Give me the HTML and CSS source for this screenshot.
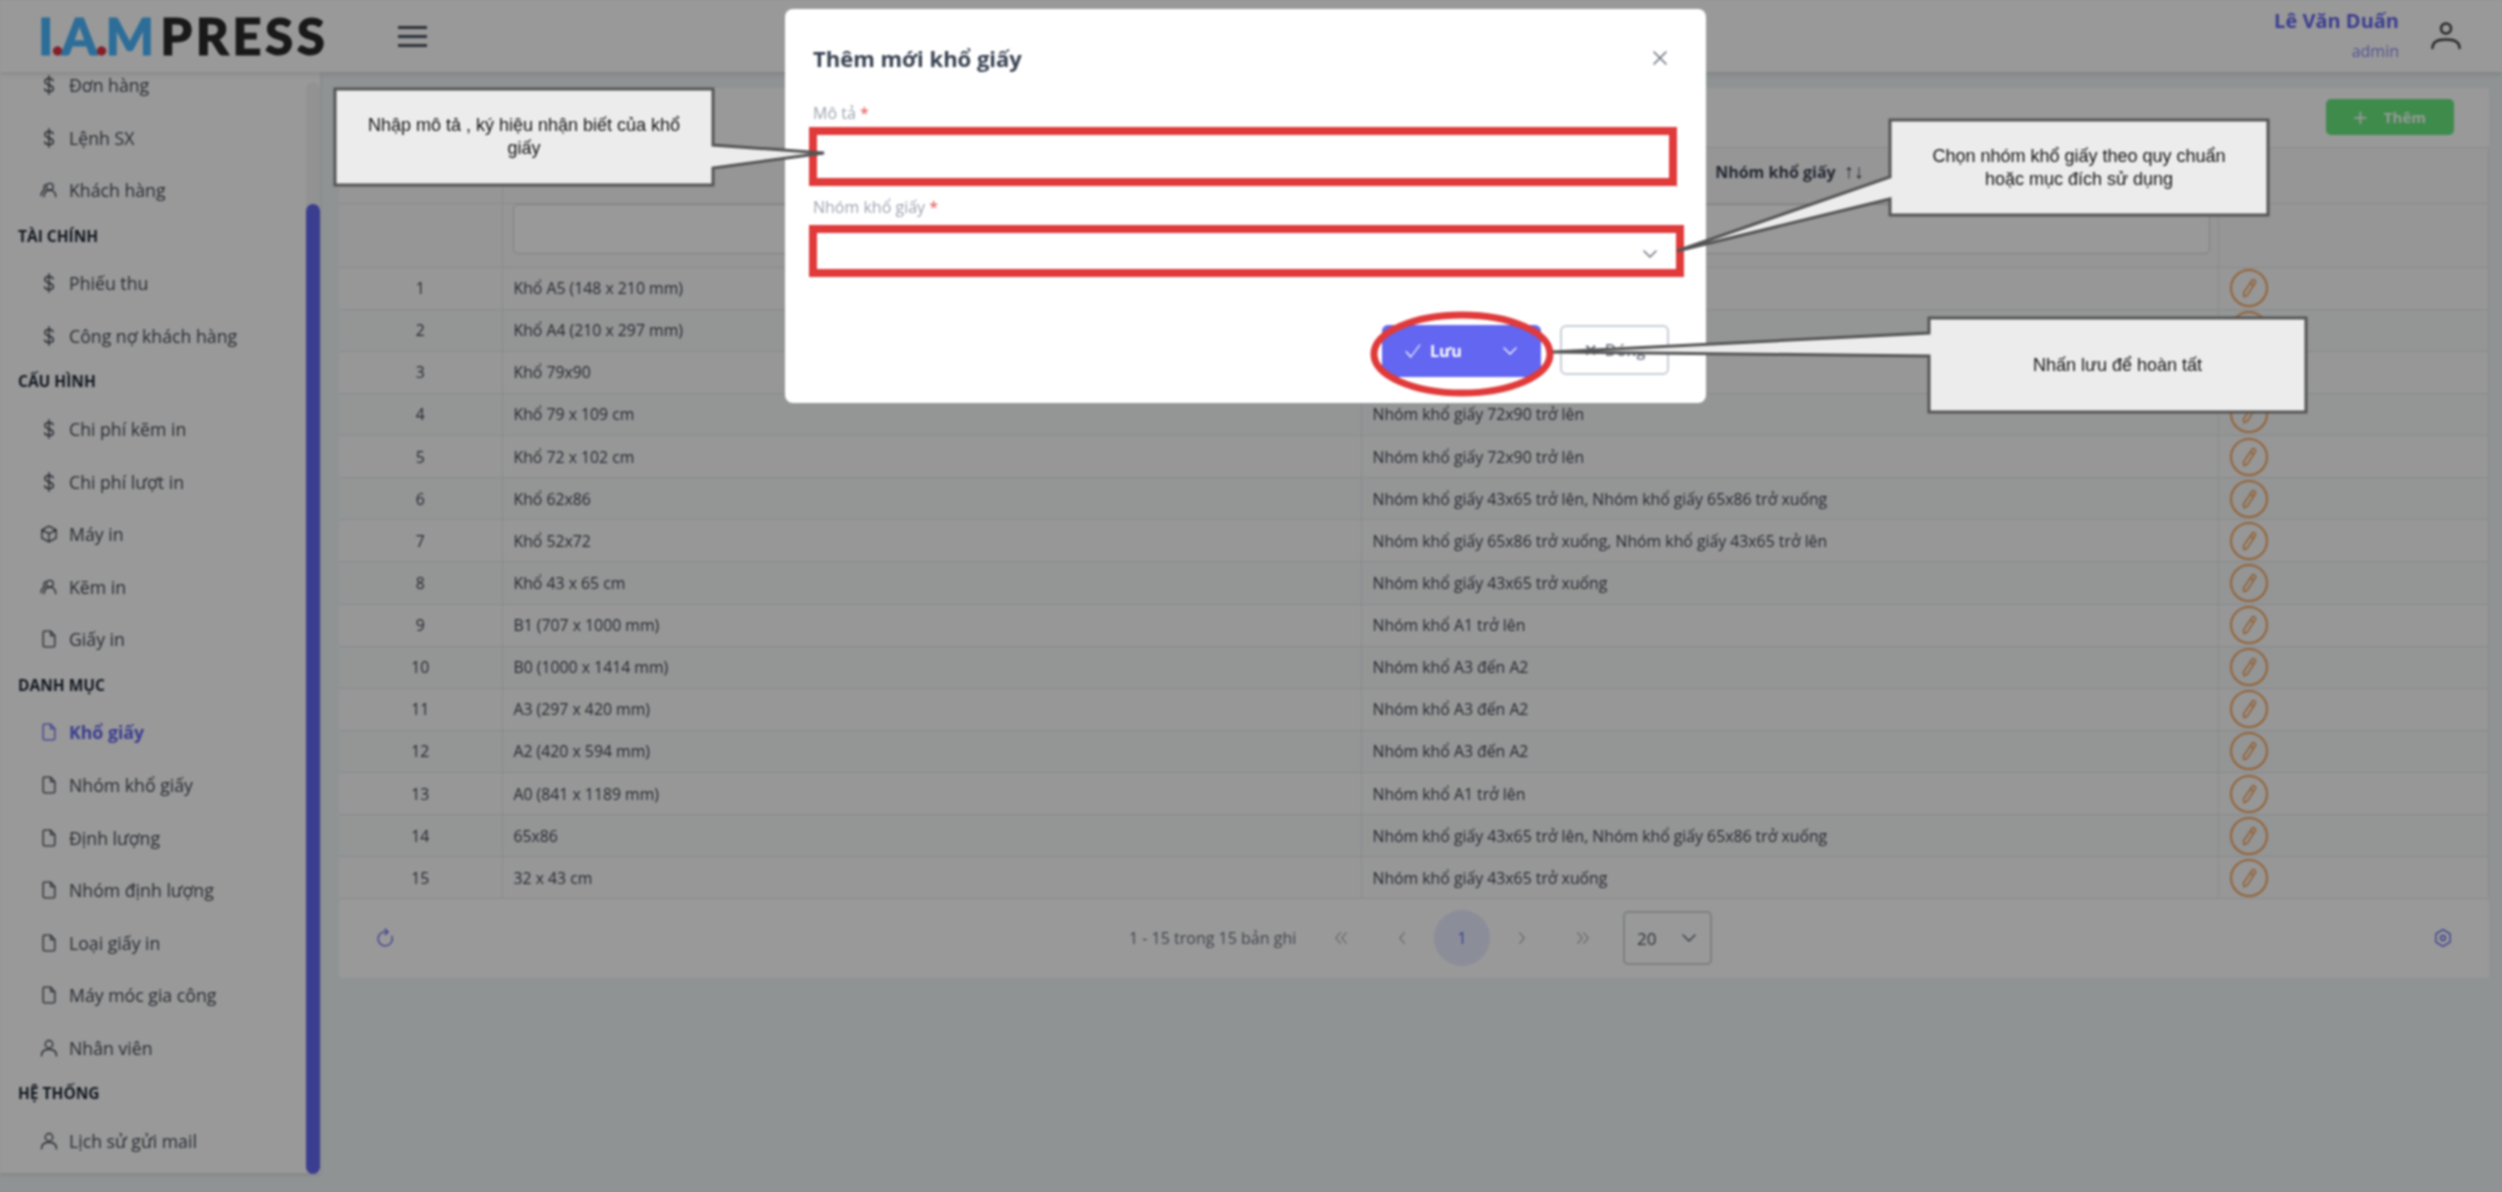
FILE: index.html
```html
<!DOCTYPE html>
<html>
	<head>
		<meta charset="utf-8" />
		<title>Khổ giấy</title>
		<link rel="stylesheet" href="styles.css">
	</head>
	<body>
		<svg class="defs" width="0" height="0">
			<symbol id="i-dollar" viewBox="0 0 16 24"><path d="M12.500 7.500C12 5.500 10.200 4.800 8 4.800 5.500 4.800 3.500 6 3.500 8.200 3.500 10.500 5.500 11.200 8 12 10.500 12.800 12.700 13.500 12.700 15.800 12.700 18 10.500 19.200 8 19.200 5.500 19.200 3.700 18.300 3.200 16.300M8 2v20"/></symbol>
			<symbol id="i-users" viewBox="0 0 24 24"><circle cx="13" cy="8" r="4"/><path d="M6 20c0-5 3-7.500 7-7.500s7 2.500 7 7.500M8 5.500C5.500 6 5 10 7 11.500 4 13 2.500 15.500 2.500 19"/></symbol>
			<symbol id="i-box" viewBox="0 0 24 24"><path d="M12 2.500l8.500 4.500v10L12 21.500 3.500 17V7zM3.500 7l8.500 4.500L20.500 7M12 11.500v10"/></symbol>
			<symbol id="i-file" viewBox="0 0 24 24"><path d="M6 2.500h8l5 5.500v11.500a2 2 0 0 1-2 2H7a2 2 0 0 1-2-2V4.500a2 2 0 0 1 1-2zM14 2.500V8h5"/></symbol>
			<symbol id="i-user" viewBox="0 0 24 24"><circle cx="12" cy="7.500" r="4.500"/><path d="M3 21.500c0-5.500 4-8 9-8s9 2.500 9 8"/></symbol>
			<symbol id="i-avatar" viewBox="0 0 30 28"><circle cx="15" cy="6.500" r="5"/><path d="M1.500 26c0-6 6-8.500 13.500-8.500S28.500 20 28.500 26"/></symbol>
			<symbol id="i-pencil" viewBox="0 0 24 24"><path d="M15.500 3.500c1.500-1.500 4.500.5 3.500 2.500L10 20l-3.500 1.500L6 17.500zM13.500 6.500l3.500 2.500"/></symbol>
			<symbol id="i-chevron" viewBox="0 0 24 24"><path d="M4 8l8 8 8-8"/></symbol>
			<symbol id="i-check" viewBox="0 0 24 24"><path d="M3 13l6 7L21 4"/></symbol>
			<symbol id="i-first" viewBox="0 0 24 24"><path d="M11 5l-6 7 6 7M19 5l-6 7 6 7"/></symbol>
			<symbol id="i-prev" viewBox="0 0 24 24"><path d="M15 5l-6 7 6 7"/></symbol>
			<symbol id="i-next" viewBox="0 0 24 24"><path d="M9 5l6 7-6 7"/></symbol>
			<symbol id="i-last" viewBox="0 0 24 24"><path d="M5 5l6 7-6 7M13 5l6 7-6 7"/></symbol>
		</svg>

		<div class="screen">
			<header class="topbar">
				<div class="logo"><span class="logo-iam">I<i>.</i>A<i>.</i>M</span> <span class="logo-press">PRESS</span></div>
				<div class="hamburger"><span></span><span></span><span></span></div>
				<div class="account">
					<div class="account-name">
						<b>Lê Văn Duấn</b>
						<small>admin</small>
					</div>
					<svg class="account-icon"><use href="#i-avatar"/></svg>
				</div>
			</header>

			<div class="layout">
				<aside class="sidebar">
					<nav class="menu">
						<ul>
							<li><a><svg><use href="#i-dollar"/></svg>Đơn hàng</a></li>
							<li><a><svg><use href="#i-dollar"/></svg>Lệnh SX</a></li>
							<li><a><svg><use href="#i-users"/></svg>Khách hàng</a></li>
							<li class="menu-title">TÀI CHÍNH</li>
							<li><a><svg><use href="#i-dollar"/></svg>Phiếu thu</a></li>
							<li><a><svg><use href="#i-dollar"/></svg>Công nợ khách hàng</a></li>
							<li class="menu-title">CẤU HÌNH</li>
							<li><a><svg><use href="#i-dollar"/></svg>Chi phí kẽm in</a></li>
							<li><a><svg><use href="#i-dollar"/></svg>Chi phí lượt in</a></li>
							<li><a><svg><use href="#i-box"/></svg>Máy in</a></li>
							<li><a><svg><use href="#i-users"/></svg>Kẽm in</a></li>
							<li><a><svg><use href="#i-file"/></svg>Giấy in</a></li>
							<li class="menu-title">DANH MỤC</li>
							<li><a class="active"><svg><use href="#i-file"/></svg>Khổ giấy</a></li>
							<li><a><svg><use href="#i-file"/></svg>Nhóm khổ giấy</a></li>
							<li><a><svg><use href="#i-file"/></svg>Định lượng</a></li>
							<li><a><svg><use href="#i-file"/></svg>Nhóm định lượng</a></li>
							<li><a><svg><use href="#i-file"/></svg>Loại giấy in</a></li>
							<li><a><svg><use href="#i-file"/></svg>Máy móc gia công</a></li>
							<li><a><svg><use href="#i-user"/></svg>Nhân viên</a></li>
							<li class="menu-title">HỆ THỐNG</li>
							<li><a><svg><use href="#i-user"/></svg>Lịch sử gửi mail</a></li>
						</ul>
					</nav>
					<div class="scroll-track"><div class="scroll-thumb"></div></div>
				</aside>

				<main class="content">
					<section class="card">
						<div class="toolbar">
							<a class="btn-add"><span class="plus">+</span>Thêm</a>
						</div>
						<table class="grid">
							<colgroup><col class="c1"><col class="c2"><col class="c3"><col class="c4"></colgroup>
							<thead>
								<tr class="head"><th>STT</th><th>Mô tả ↑↓</th><th>Nhóm khổ giấy <span class="sort">↑↓</span></th><th></th></tr>
								<tr class="filter"><th></th><th><div class="filter-input"></div></th><th><div class="filter-input"></div></th><th></th></tr>
							</thead>
							<tbody>
								<tr><td>1</td><td>Khổ A5 (148 x 210 mm)</td><td>Nhóm khổ A5 trở xuống</td><td><svg class="edit"><use href="#i-pencil"/></svg></td></tr>
								<tr><td>2</td><td>Khổ A4 (210 x 297 mm)</td><td>Nhóm khổ A5 trở xuống</td><td><svg class="edit"><use href="#i-pencil"/></svg></td></tr>
								<tr><td>3</td><td>Khổ 79x90</td><td>Nhóm khổ giấy 72x90 trở lên</td><td><svg class="edit"><use href="#i-pencil"/></svg></td></tr>
								<tr><td>4</td><td>Khổ 79 x 109 cm</td><td>Nhóm khổ giấy 72x90 trở lên</td><td><svg class="edit"><use href="#i-pencil"/></svg></td></tr>
								<tr><td>5</td><td>Khổ 72 x 102 cm</td><td>Nhóm khổ giấy 72x90 trở lên</td><td><svg class="edit"><use href="#i-pencil"/></svg></td></tr>
								<tr><td>6</td><td>Khổ 62x86</td><td>Nhóm khổ giấy 43x65 trở lên, Nhóm khổ giấy 65x86 trở xuống</td><td><svg class="edit"><use href="#i-pencil"/></svg></td></tr>
								<tr><td>7</td><td>Khổ 52x72</td><td>Nhóm khổ giấy 65x86 trở xuống, Nhóm khổ giấy 43x65 trở lên</td><td><svg class="edit"><use href="#i-pencil"/></svg></td></tr>
								<tr><td>8</td><td>Khổ 43 x 65 cm</td><td>Nhóm khổ giấy 43x65 trở xuống</td><td><svg class="edit"><use href="#i-pencil"/></svg></td></tr>
								<tr><td>9</td><td>B1 (707 x 1000 mm)</td><td>Nhóm khổ A1 trở lên</td><td><svg class="edit"><use href="#i-pencil"/></svg></td></tr>
								<tr><td>10</td><td>B0 (1000 x 1414 mm)</td><td>Nhóm khổ A3 đến A2</td><td><svg class="edit"><use href="#i-pencil"/></svg></td></tr>
								<tr><td>11</td><td>A3 (297 x 420 mm)</td><td>Nhóm khổ A3 đến A2</td><td><svg class="edit"><use href="#i-pencil"/></svg></td></tr>
								<tr><td>12</td><td>A2 (420 x 594 mm)</td><td>Nhóm khổ A3 đến A2</td><td><svg class="edit"><use href="#i-pencil"/></svg></td></tr>
								<tr><td>13</td><td>A0 (841 x 1189 mm)</td><td>Nhóm khổ A1 trở lên</td><td><svg class="edit"><use href="#i-pencil"/></svg></td></tr>
								<tr><td>14</td><td>65x86</td><td>Nhóm khổ giấy 43x65 trở lên, Nhóm khổ giấy 65x86 trở xuống</td><td><svg class="edit"><use href="#i-pencil"/></svg></td></tr>
								<tr><td>15</td><td>32 x 43 cm</td><td>Nhóm khổ giấy 43x65 trở xuống</td><td><svg class="edit"><use href="#i-pencil"/></svg></td></tr>
							</tbody>
						</table>
						<div class="pager">
							<svg class="pager-refresh" viewBox="0 0 24 24"><path d="M14 5a8.500 8.500 0 1 0 5 5M11 1l3.500 4-4 3"/></svg>
							<div class="pager-mid">
								<span class="pager-info">1 - 15 trong 15 bản ghi</span>
								<span class="pager-link"><svg><use href="#i-first"/></svg></span>
								<span class="pager-link"><svg><use href="#i-prev"/></svg></span>
								<span class="pager-page">1</span>
								<span class="pager-link"><svg><use href="#i-next"/></svg></span>
								<span class="pager-link"><svg><use href="#i-last"/></svg></span>
								<div class="pager-size">20<svg><use href="#i-chevron"/></svg></div>
							</div>
							<svg class="pager-gear" viewBox="0 0 24 24"><circle cx="12" cy="12" r="3"/><path d="M12 2l8.500 5v10L12 22l-8.500-5V7z"/></svg>
						</div>
					</section>
				</main>
			</div>

			<div class="mask"></div>

			<div class="modal">
				<div class="modal-head">
					<h2>Thêm mới khổ giấy</h2>
					<svg class="modal-close" viewBox="0 0 16 16"><path d="M2 2l12 12M14 2L2 14"/></svg>
				</div>
				<label class="field-label">Mô tả <em>*</em></label>
				<div class="field"></div>
				<label class="field-label">Nhóm khổ giấy <em>*</em></label>
				<div class="field field-select"><svg><use href="#i-chevron"/></svg></div>
				<div class="modal-foot">
					<a class="btn-save"><svg class="tick"><use href="#i-check"/></svg><b>Lưu</b><svg><use href="#i-chevron"/></svg></a>
					<a class="btn-close"><span>✕</span>Đóng</a>
				</div>
			</div>

			<!-- chu thich huong dan -->
			<svg class="notes" viewBox="0 0 2502 1192">
				<rect class="red" x="813" y="131" width="860" height="51"/>
				<rect class="red" x="813" y="229" width="867" height="44"/>
				<ellipse class="red-oval" cx="1462" cy="354" rx="88" ry="39"/>
				<path class="note" d="M335 89H713V145L824 153 713 168V185H335z"/>
				<path class="note" d="M1890 120H2268V215H1890V199L1677 251 1890 177z"/>
				<path class="note" d="M1929 318H2306V412H1929V356L1553 352 1929 333z"/>
			</svg>
			<div class="note-text note-a">Nhập mô tả , ký hiệu nhận biết của khổ giấy</div>
			<div class="note-text note-b">Chọn nhóm khổ giấy theo quy chuẩn hoặc mục đích sử dụng</div>
			<div class="note-text note-c">Nhấn lưu để hoàn tất</div>
		</div>
	</body>
</html>
```

FILE: styles.css
```css
body,ul,h2{padding: 0;margin: 0;}
body{background: #909495;font-family: "Open Sans","Noto Sans",sans-serif;font-size: 16px;color: #4b5563;overflow: hidden;}
.defs{position: absolute;}
svg{fill: none;stroke: currentColor;stroke-width: 1.6;stroke-linecap: round;stroke-linejoin: round;}

.screen{position: relative;width: 2502px;height: 1192px;overflow: hidden;background: #eef5f7;filter: blur(.8px);}

/* top bar */
.topbar{height: 72px;background: #fff;display: flex;align-items: center;padding: 0 41px 0 38px;box-sizing: border-box;box-shadow: 0 2px 6px rgba(0,0,0,.12);position: relative;z-index: 1;}
.logo{width: 360px;font-family: "Lato",sans-serif;font-weight: 900;font-size: 51px;line-height: 72px;color: #2a2a2a;white-space: nowrap;word-spacing: -4px;-webkit-text-stroke: 1px currentColor;}
.logo-iam{color: #4bb7ff;letter-spacing: -2px;}
.logo-iam i{font-style: normal;color: #d34;}
.logo-press{letter-spacing: 3.500px;}
.hamburger{width: 29px;display: flex;flex-direction: column;gap: 6px;}
.hamburger span{height: 3px;background: #4b5563;}
.account{margin-left: auto;display: flex;align-items: center;gap: 32px;}
.account-name{text-align: right;color: #6366f1;line-height: 30px;}
.account-name b{display: block;font-size: 20px;}
.account-name small{display: block;font-size: 16px;opacity: .75;}
.account-icon{width: 30px;height: 28px;color: #444;stroke-width: 2.5;}

/* sidebar */
.layout{display: flex;}
.sidebar{width: 320px;height: 1101px;background: #fff;display: flex;box-shadow: 0 2px 4px rgba(0,0,0,.1);}
.menu{width: 306px;overflow: hidden;}
.menu ul{list-style: none;margin-top: -13px;}
.menu a{display: flex;align-items: center;height: 52.6px;padding-left: 39px;color: #404853;font-size: 17.7px;}
.menu a svg{width: 20px;height: 22px;margin-right: 10px;flex: none;}
.menu a.active{color: #6366f1;font-weight: 700;}
.menu-title{height: 40.4px;line-height: 39.5px;padding-left: 18px;font-weight: 700;font-size: 15.500px;color: #1f2937;}
.scroll-track{width: 14px;height: 1091px;background: #f3f4f6;border-radius: 7px;margin-top: 10px;}
.scroll-thumb{width: 14px;height: 970px;margin-top: 122px;background: #6366f1;border-radius: 7px;}

/* content */
.content{flex: 1;padding: 16px 14px 0 19px;}
.card{background: #fff;height: 890px;}
.toolbar{height: 60px;display: flex;justify-content: flex-end;align-items: flex-start;padding: 11px 35px 0 0;box-sizing: border-box;border-bottom: 1px solid #e5e7eb;}
.btn-add{width: 128px;height: 36px;background: #69e87f;border-radius: 5px;display: flex;align-items: center;justify-content: center;gap: 16px;color: #fff;font-weight: 700;font-size: 15px;}
.plus{font-size: 26px;font-weight: 400;line-height: 26px;}

.grid{width: 2149px;border-collapse: collapse;table-layout: fixed;}
.c1{width: 163px;}
.c2{width: 859px;}
.c3{width: 857px;}
.c4{width: 270px;}
.grid th{border: 1px solid #e5e7eb;border-width: 0 1px 1px 0;color: #374151;font-size: 16px;font-weight: 700;background: #fafbfc;}
.head th{height: 55px;padding: 0 0 9px;box-sizing: border-box;}
.filter th{height: 63px;vertical-align: top;padding: 0 8px 0 10px;}
.filter-input{height: 50px;background: #fff;border: 1px solid #d1d5db;border-radius: 5px;box-sizing: border-box;}
.sort{font-size: 20px;font-weight: 700;margin-left: 4px;}
.grid td{height: 42.14px;padding: 0 11px;box-sizing: border-box;border-right: 1px solid #e5e7eb;border-bottom: 1px solid #e5e7eb;font-size: 15.800px;white-space: nowrap;color: #3d4450;}
.grid td:first-child{text-align: center;}
.grid tbody tr:nth-child(even){background: #f7f8f9;}
.grid tbody tr:nth-child(odd){background: #fcfcfc;}
.edit{display: block;width: 38px;height: 38px;padding: 6px;box-sizing: border-box;border: 2px solid #f5a45a;border-radius: 50%;color: #f5a45a;stroke-width: 1.800;}

.pager{height: 78px;display: flex;align-items: center;padding: 0 36px 0 37px;}
.pager-refresh{width: 20px;height: 20px;color: #6366f1;}
.pager-gear{width: 20px;height: 20px;color: #6366f1;}
.pager-mid{margin-left: 733px;flex: 1;display: flex;align-items: center;font-size: 16px;color: #6b7280;}
.pager-info{width: 181px;}
.pager-link{width: 61px;display: flex;justify-content: center;}
.pager-link svg{width: 18px;height: 18px;stroke-width: 1.2;}
.pager-page{width: 56px;height: 56px;line-height: 56px;border-radius: 50%;background: #e8ecff;color: #6366f1;text-align: center;margin: 0 1px 0 2px;}
.pager-size{width: 89px;height: 54px;margin-left: 10px;box-sizing: border-box;border: 2px solid #d1d5db;border-radius: 5px;display: flex;align-items: center;justify-content: space-between;padding: 0 12px;font-size: 17px;color: #4b5563;}
.pager-size svg{width: 18px;height: 18px;}

.mask{position: absolute;left: 0;top: 0;width: 100%;height: 100%;background: rgba(0,0,0,.4);z-index: 2;}

/* modal */
.modal{position: absolute;z-index: 3;left: 785px;top: 9px;width: 921px;height: 394px;background: #fff;border-radius: 8px;box-sizing: border-box;padding: 0 28px;}
.modal-head{height: 93px;display: flex;align-items: center;justify-content: space-between;padding: 5px 10px 0 0;box-sizing: border-box;}
.modal-head h2{font-size: 22px;font-weight: 700;color: #374151;}
.modal-close{width: 16px;height: 16px;color: #6b7280;}
.field-label{display: block;font-size: 16px;color: #9ca3af;line-height: 22px;}
.field-label em{font-style: normal;color: #e24c4c;}
.field{height: 59px;margin: 4px 0 9px -3px;width: 868px;}
.field-select{height: 52px;width: 875px;margin-top: 4px;display: flex;align-items: center;justify-content: flex-end;padding: 12px 26px 0 0;box-sizing: border-box;}
.field-select svg{width: 18px;height: 18px;color: #6b7280;stroke-width: 2;}
.modal-foot{display: flex;justify-content: flex-end;align-items: flex-start;gap: 19px;margin-top: 51px;padding-right: 9px;}
.btn-save{width: 159px;height: 52px;background: #6366f1;color: #fff;border-radius: 6px;display: flex;align-items: center;padding: 0 22px;box-sizing: border-box;font-size: 16px;}
.btn-save b{margin-left: 8px;flex: 1;}
.btn-save svg{width: 18px;height: 18px;}
.btn-close{width: 109px;height: 50px;box-sizing: border-box;border: 2px solid #c8cdd6;border-radius: 6px;display: flex;align-items: center;justify-content: center;gap: 8px;color: #6b7280;font-weight: 600;}

/* annotations */
.notes{position: absolute;z-index: 4;left: 0;top: 0;width: 2502px;height: 1192px;stroke-linecap: butt;stroke-linejoin: miter;}
.red{stroke: #e03a3a;stroke-width: 8;}
.red-oval{stroke: #e03a3a;stroke-width: 7;}
.note{fill: #ececec;stroke: #555;stroke-width: 3;}
.note-text{position: absolute;z-index: 5;display: flex;align-items: center;justify-content: center;text-align: center;font-family: "Liberation Sans",sans-serif;font-size: 18px;line-height: 23px;color: #111;box-sizing: border-box;}
.note-a{left: 335px;top: 89px;width: 378px;height: 96px;padding: 0 25px;}
.note-b{left: 1890px;top: 120px;width: 378px;height: 95px;padding: 0 30px;}
.note-c{left: 1929px;top: 318px;width: 377px;height: 94px;}
```
